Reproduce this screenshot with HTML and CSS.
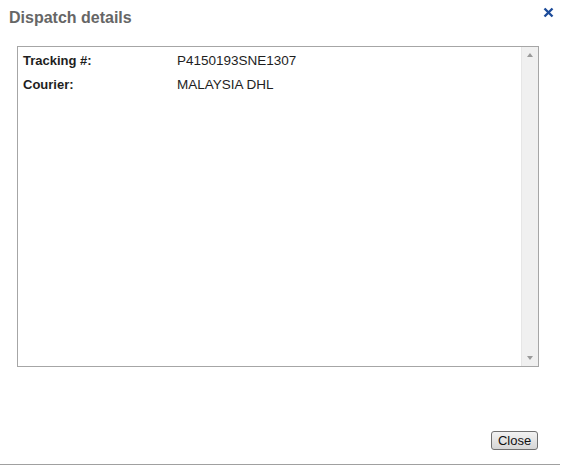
FILE: index.html
```html
<!DOCTYPE html>
<html>
<head>
<meta charset="utf-8">
<link rel="stylesheet" href="styles.css">
</head>
<body>
<div class="dialog">
  <div class="header">
    <h1 class="title">Dispatch details</h1>
    <svg class="close-x" width="11" height="11" viewBox="0 0 11 11"><path d="M1.5 1.5 L9.5 9.5 M9.5 1.5 L1.5 9.5" stroke="#1d4c9a" stroke-width="2.4" stroke-linecap="butt"/></svg>
  </div>
  <div class="box">
    <div class="content">
      <div class="row"><span class="label">Tracking #:</span><span class="value">P4150193SNE1307</span></div>
      <div class="row"><span class="label">Courier:</span><span class="value">MALAYSIA DHL</span></div>
    </div>
    <div class="scrollbar">
      <span class="arrow up"></span>
      <span class="arrow down"></span>
    </div>
  </div>
  <div class="footer">
    <button class="btn">Close</button>
  </div>
  <div class="rule"></div>
</div>
</body>
</html>
```
FILE: styles.css
```css
html, body {
  margin: 0;
  padding: 0;
  background: #fff;
}
body {
  font-family: "Liberation Sans", Arial, sans-serif;
  width: 562px;
  height: 466px;
  overflow: hidden;
}
.dialog {
  display: flex;
  flex-direction: column;
  height: 466px;
}
.header {
  display: flex;
  justify-content: space-between;
  align-items: flex-start;
  height: 46px;
  padding: 0 8px 0 9px;
}
.title {
  margin: 0;
  padding-top: 8px;
  font-size: 16px;
  font-weight: bold;
  color: #666;
  line-height: 20px;
}
.close-x {
  margin-top: 7px;
}
.box {
  margin-left: 17px;
  width: 520px;
  height: 319px;
  border: 1px solid #a6a6a6;
  display: flex;
}
.content {
  flex: 1;
  padding: 2px 5px;
}
.row {
  display: flex;
  font-size: 13px;
  line-height: 24px;
  color: #1e1e1e;
}
.label {
  font-weight: bold;
  width: 154px;
}
.value {
  font-size: 13.5px;
}
.scrollbar {
  width: 16px;
  background: #f0f0f0;
  border-left: 1px solid #e6e6e6;
  display: flex;
  flex-direction: column;
  justify-content: space-between;
  align-items: center;
  padding: 6px 0;
}
.arrow {
  width: 0;
  height: 0;
  border-left: 3.5px solid transparent;
  border-right: 3.5px solid transparent;
}
.arrow.up {
  border-bottom: 4px solid #9a9a9a;
}
.arrow.down {
  border-top: 4px solid #9a9a9a;
}
.footer {
  flex: 1;
  display: flex;
  justify-content: flex-end;
  align-items: flex-start;
  padding: 64px 24px 0 0;
}
.btn {
  width: 47px;
  height: 19px;
  padding: 0;
  font-family: "Liberation Sans", Arial, sans-serif;
  font-size: 13px;
  color: #111;
  border: 1px solid #707070;
  border-radius: 3px;
  background: linear-gradient(#f2f2f2, #e4e4e4 50%, #d6d6d6);
}
.rule {
  height: 1px;
  margin: 0 2px 1px 0;
  background: #a0a0a0;
}
```
